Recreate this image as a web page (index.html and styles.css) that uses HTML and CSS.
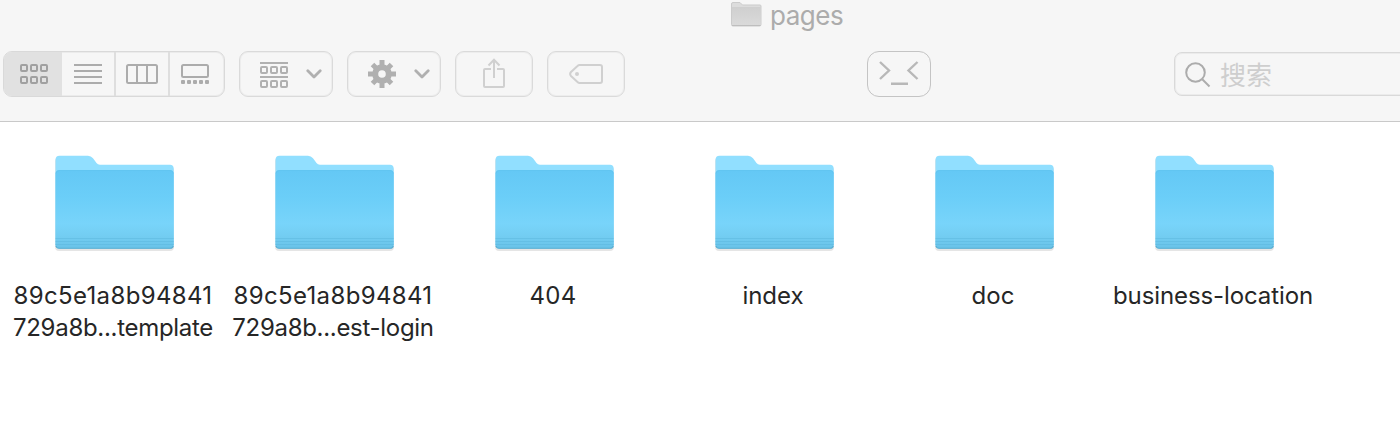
FILE: index.html
```html
<!DOCTYPE html>
<html lang="zh">
<head>
<meta charset="utf-8">
<title>pages</title>
<link rel="stylesheet" href="styles.css">
</head>
<body>
<svg class="defs" width="0" height="0" aria-hidden="true">
  <defs>
    <linearGradient id="front" x1="0" y1="0" x2="0" y2="1">
      <stop offset="0" stop-color="#64c8f5"/>
      <stop offset="0.35" stop-color="#6bcef8"/>
      <stop offset="0.68" stop-color="#78d4fa"/>
      <stop offset="0.84" stop-color="#73cdf2"/>
      <stop offset="1" stop-color="#68c2e8"/>
    </linearGradient>
    <linearGradient id="mini" x1="0" y1="0" x2="0" y2="1">
      <stop offset="0" stop-color="#cfcfcf"/>
      <stop offset="1" stop-color="#dadada"/>
    </linearGradient>
    <symbol id="folder" viewBox="0 0 124 100">
      <path d="M2 6.500Q2 2.500 6 2.500H35Q38 2.500 40 5L44 10Q45 11.500 47 11.500H117Q121 11.500 121 15.500V92Q121 96 117 96H6Q2 96 2 92Z" fill="#000" opacity=".1"/>
      <path d="M2.500 5Q2.500 .700 6.500 .700H35Q38 .700 40 3.200L43.500 8Q44.700 9.700 47 9.700H117Q120.700 9.700 120.700 13.700V90H2.500Z" fill="#91dfff"/>
      <path d="M2.500 19Q2.500 15 6.500 15H117Q120.700 15 120.700 19V90Q120.700 93.800 117 93.800H6.500Q2.500 93.800 2.500 90Z" fill="url(#front)"/>
      <path d="M3 18.500Q3.300 15.500 6.500 15.500H117Q120 15.500 120.300 18.500" fill="none" stroke="#5fc3ef" stroke-width="1" opacity=".7"/>
      <path d="M2.500 83.500H120.700M2.500 86.500H120.700M2.500 89.500H120.700" stroke="#59b5dc" stroke-width="1" opacity=".45"/>
      <path d="M3 91Q3.500 93.300 6.500 93.300H117Q119.700 93.300 120.300 91" fill="none" stroke="#55aacd" stroke-width="1.100" opacity=".8"/>
    </symbol>
  </defs>
</svg>
<header class="header">
  <div class="title">
    <svg width="32" height="27" viewBox="0 0 32 27">
      <path d="M1.500 4Q1.500 2.500 3 2.500H10L12.500 5H30Q31 5 31 6V24.500Q31 26 29.500 26H3Q1.500 26 1.500 24.500Z" fill="#dcdcdc" stroke="#cbcbcb"/>
      <path d="M2 7H30.500V25H2Z" fill="url(#mini)"/>
      <path d="M2 25.500H30.500" stroke="#bebebe"/>
    </svg>
    <span>pages</span>
  </div>
  <div class="toolbar">
    <div class="segments">
      <div class="segment active">
        <svg width="30" height="22" viewBox="0 0 30 22" fill="none" stroke="#a0a0a0" stroke-width="2"><rect x="2" y="2" width="6" height="6" rx="1"/><rect x="12" y="2" width="6" height="6" rx="1"/><rect x="22" y="2" width="6" height="6" rx="1"/><rect x="2" y="14" width="6" height="6" rx="1"/><rect x="12" y="14" width="6" height="6" rx="1"/><rect x="22" y="14" width="6" height="6" rx="1"/></svg>
      </div>
      <div class="segment">
        <svg width="28" height="20" viewBox="0 0 28 20" stroke="#acacac" stroke-width="2"><path d="M0 1H28M0 7H28M0 13H28M0 19H28"/></svg>
      </div>
      <div class="segment">
        <svg width="32" height="20" viewBox="0 0 32 20" fill="none" stroke="#acacac" stroke-width="2"><rect x="1" y="1" width="30" height="18" rx="1.500"/><path d="M11 1V19M21 1V19"/></svg>
      </div>
      <div class="segment gallery">
        <svg width="28" height="20" viewBox="0 0 28 20" fill="none" stroke="#acacac" stroke-width="2"><rect x="1" y="1" width="26" height="12" rx="1.500"/><g fill="#acacac" stroke="none"><rect y="16" width="4" height="4" rx="1"/><rect x="6" y="16" width="4" height="4" rx="1"/><rect x="12" y="16" width="4" height="4" rx="1"/><rect x="18" y="16" width="4" height="4" rx="1"/><rect x="24" y="16" width="4" height="4" rx="1"/></g></svg>
      </div>
    </div>
    <div class="button menu">
      <svg class="group" width="28" height="26" viewBox="0 0 28 26" fill="none" stroke="#b0b0b0" stroke-width="2"><path d="M0 1H28M0 15H28"/><rect x="1" y="5" width="6" height="6" rx="1"/><rect x="11" y="5" width="6" height="6" rx="1"/><rect x="21" y="5" width="6" height="6" rx="1"/><rect x="1" y="19" width="6" height="6" rx="1"/><rect x="11" y="19" width="6" height="6" rx="1"/><rect x="21" y="19" width="6" height="6" rx="1"/></svg>
      <svg class="chevron" width="16" height="10" viewBox="0 0 16 10"><path d="M1.800 1.800L8 8L14.200 1.800"/></svg>
    </div>
    <div class="button menu">
      <svg width="28" height="28" viewBox="-14 -14 28 28">
        <g stroke="#b0b0b0" stroke-width="5"><path d="M0-14V-6M0 14V6M-14 0H-6M14 0H6"/><path d="M-9.500-9.500L-5-5M9.500 9.500L5 5M-9.500 9.500L-5 5M9.500-9.500L5-5"/></g>
        <circle r="6.800" fill="none" stroke="#b0b0b0" stroke-width="6"/>
      </svg>
      <svg class="chevron" width="16" height="10" viewBox="0 0 16 10"><path d="M1.800 1.800L8 8L14.200 1.800"/></svg>
    </div>
    <div class="button single share">
      <svg width="22" height="30" viewBox="0 0 22 30" fill="none" stroke="#d0d0d0" stroke-width="2"><path d="M8 11H2Q1 11 1 12V28Q1 29 2 29H20Q21 29 21 28V12Q21 11 20 11H14M11 20V2M5.500 7.500L11 1.800L16.500 7.500"/></svg>
    </div>
    <div class="button single">
      <svg width="34" height="20" viewBox="0 0 34 20"><path d="M10.500 1H31Q33 1 33 3V17Q33 19 31 19H10.500Q9.500 19 8.500 18L2 12Q.300 10 2 8L8.500 2Q9.500 1 10.500 1Z" fill="none" stroke="#d0d0d0" stroke-width="2"/><circle cx="8" cy="10" r="2" fill="#d0d0d0"/></svg>
    </div>
    <div class="button terminal">
      <svg width="40" height="26" viewBox="0 0 40 26" fill="none" stroke="#b8b8b8" stroke-width="2.400"><path d="M1 2L10 10.500L1 19M38.500 2L29.500 10.500L38.500 19M12 23.800H29"/></svg>
    </div>
    <div class="search">
      <svg width="26" height="26" viewBox="0 0 26 26" fill="none" stroke="#acacac" stroke-width="2"><circle cx="10.500" cy="10.500" r="9.300"/><path d="M17 17L24.500 24.500"/></svg>
      <span>搜索</span>
    </div>
  </div>
</header>
<main class="files">
  <div class="file"><svg class="folder"><use href="#folder"/></svg><div class="name"><span class="hash">89c5e1a8b94841</span><br><span class="tail">729a8b...template</span></div></div>
  <div class="file"><svg class="folder"><use href="#folder"/></svg><div class="name"><span class="hash">89c5e1a8b94841</span><br><span class="tail">729a8b...est-login</span></div></div>
  <div class="file"><svg class="folder"><use href="#folder"/></svg><div class="name"><span class="hash">404</span></div></div>
  <div class="file"><svg class="folder"><use href="#folder"/></svg><div class="name">index</div></div>
  <div class="file"><svg class="folder"><use href="#folder"/></svg><div class="name">doc</div></div>
  <div class="file"><svg class="folder"><use href="#folder"/></svg><div class="name"><span class="long">business-location</span></div></div>
</main>
</body>
</html>
```
FILE: styles.css
```css
* { box-sizing: border-box; }
body {
  margin: 0;
  height: 434px;
  overflow: hidden;
  background: #fff;
  color: #262626;
  font-family: Inter, "Noto Sans CJK SC", sans-serif;
  font-size: 24px;
}
svg { display: block; flex: none; }
.defs { position: absolute; }
.header {
  height: 122px;
  background: #f6f6f6;
  border-bottom: 1px solid #c9c9c9;
  overflow: hidden;
}
.title {
  display: flex;
  height: 51px;
  padding-left: 730px;
  gap: 8px;
  color: #acacac;
  font-size: 26px;
  letter-spacing: -0.45px;
  line-height: 31px;
}
.toolbar { display: flex; height: 46px; padding-left: 3px; }
.segments {
  display: flex;
  width: 222px;
  height: 46px;
  border: 1px solid #d9d9d9;
  box-shadow: inset 0 0 0 1px #ebebeb;
  border-radius: 9px;
  overflow: hidden;
  margin-right: 14px;
  padding: 0 1px;
  flex: none;
}
.segment {
  display: flex;
  width: 54px;
  align-items: center;
  justify-content: center;
  border-right: 2px solid #dedede;
}
.segment.active { width: 58px; margin-left: -1px; padding-left: 2px; background: #e1e1e1; border: 0; }
.segment.gallery { width: 53px; border: 0; padding-right: 4px; }
.button {
  display: flex;
  flex: none;
  align-items: center;
  height: 46px;
  border: 1px solid #dadada;
  box-shadow: inset 0 0 0 1px #ededed;
  border-radius: 9px;
  margin-right: 14px;
}
.menu { width: 94px; padding-left: 20px; gap: 18px; }
.group { margin-top: 2px; }
.chevron { fill: none; stroke: #b0b0b0; stroke-width: 2.8px; stroke-linecap: round; stroke-linejoin: round; }
.single { width: 78px; justify-content: center; }
.share svg { margin-bottom: 2px; }
.terminal {
  width: 64px;
  margin: 0 243px 0 228px;
  justify-content: center;
  border-color: #c4c4c4;
  border-radius: 12px;
  box-shadow: none;
}
.terminal svg { margin-bottom: 3px; }
.search {
  display: flex;
  flex: none;
  align-items: center;
  width: 250px;
  height: 44px;
  margin-top: 1px;
  padding-left: 10px;
  gap: 9px;
  border: 1px solid #d9d9d9;
  box-shadow: inset 0 0 0 1px #ebebeb;
  border-radius: 8px;
  color: #cecece;
  font-family: "Noto Sans CJK SC", sans-serif;
  font-size: 26px;
  line-height: 40px;
}
.search svg { margin-top: 2px; }
.files { display: grid; grid-template-columns: repeat(6, 220px); padding: 33px 0 0 3px; }
.file { display: flex; flex-direction: column; align-items: center; }
.folder { width: 124px; height: 100px; margin-left: 3px; }
.name { margin-top: 25px; line-height: 32px; text-align: center; white-space: nowrap; }
.hash { letter-spacing: 0.35px; }
.tail { letter-spacing: -0.3px; }
.long { letter-spacing: -0.1px; }
```
